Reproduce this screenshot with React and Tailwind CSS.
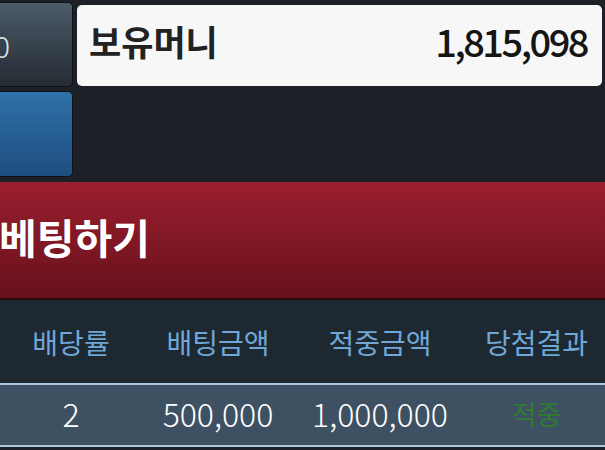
export default function App() {
  const font = { fontFamily: '"Noto Sans CJK KR", "Noto Sans", sans-serif' };
  return (
    <div className="w-[605px] h-[450px] overflow-hidden bg-[#1d2127] flex flex-col" style={font}>
      <div className="flex flex-row gap-[4px] pr-[3px]">
        <div className="flex flex-col gap-[4px] w-[142px] -ml-[69px] shrink-0">
          <div className="mt-[2px] h-[85px] rounded-[5px] border border-[#0e1217] bg-gradient-to-b from-[#4c5b69] to-[#252c34] flex items-center justify-center text-[30px] font-light text-[#e4e6e8] leading-none">
            0
          </div>
          <div className="h-[86px] rounded-[5px] border border-[#0e1217] bg-gradient-to-b from-[#2f71a9] to-[#1e4e80]"></div>
        </div>
        <div className="flex-1 mt-[5px] h-[81px] rounded-[5px] bg-[#f7f7f8] flex items-center justify-between pl-[12px] pr-[15px] pb-[10px]">
          <span className="text-[35px] font-bold text-[#222] leading-none">보유머니</span>
          <span className="text-[38px] font-medium text-[#151515] leading-none tracking-[-2.5px]">1,815,098</span>
        </div>
      </div>
      <div className="mt-[5px] h-[118px] bg-gradient-to-b from-[#9b1f2f] to-[#67111b] border-b-2 border-[#2a080c] flex items-center pb-[7px]">
        <span className="-ml-[1px] text-[41px] font-bold text-white leading-none">베팅하기</span>
      </div>
      <div className="h-[83px] bg-[#1e2831] grid grid-cols-[142px_152px_172px_1fr] items-center text-[28px] text-[#6fa7d8] leading-none">
        <div className="text-center">배당률</div>
        <div className="text-center">배팅금액</div>
        <div className="text-center">적중금액</div>
        <div className="text-center pl-[2px]">당첨결과</div>
      </div>
      <div className="h-[64px] bg-[#3e5163] border-y-2 border-[#a9c8e0] grid grid-cols-[142px_152px_172px_1fr] items-center text-[32px] font-light text-white leading-none pb-[4px]">
        <div className="text-center">2</div>
        <div className="text-center">500,000</div>
        <div className="text-center">1,000,000</div>
        <div className="text-center text-[27px] font-normal text-[#2f7d30] pl-[2px]">적중</div>
      </div>
    </div>
  );
}
